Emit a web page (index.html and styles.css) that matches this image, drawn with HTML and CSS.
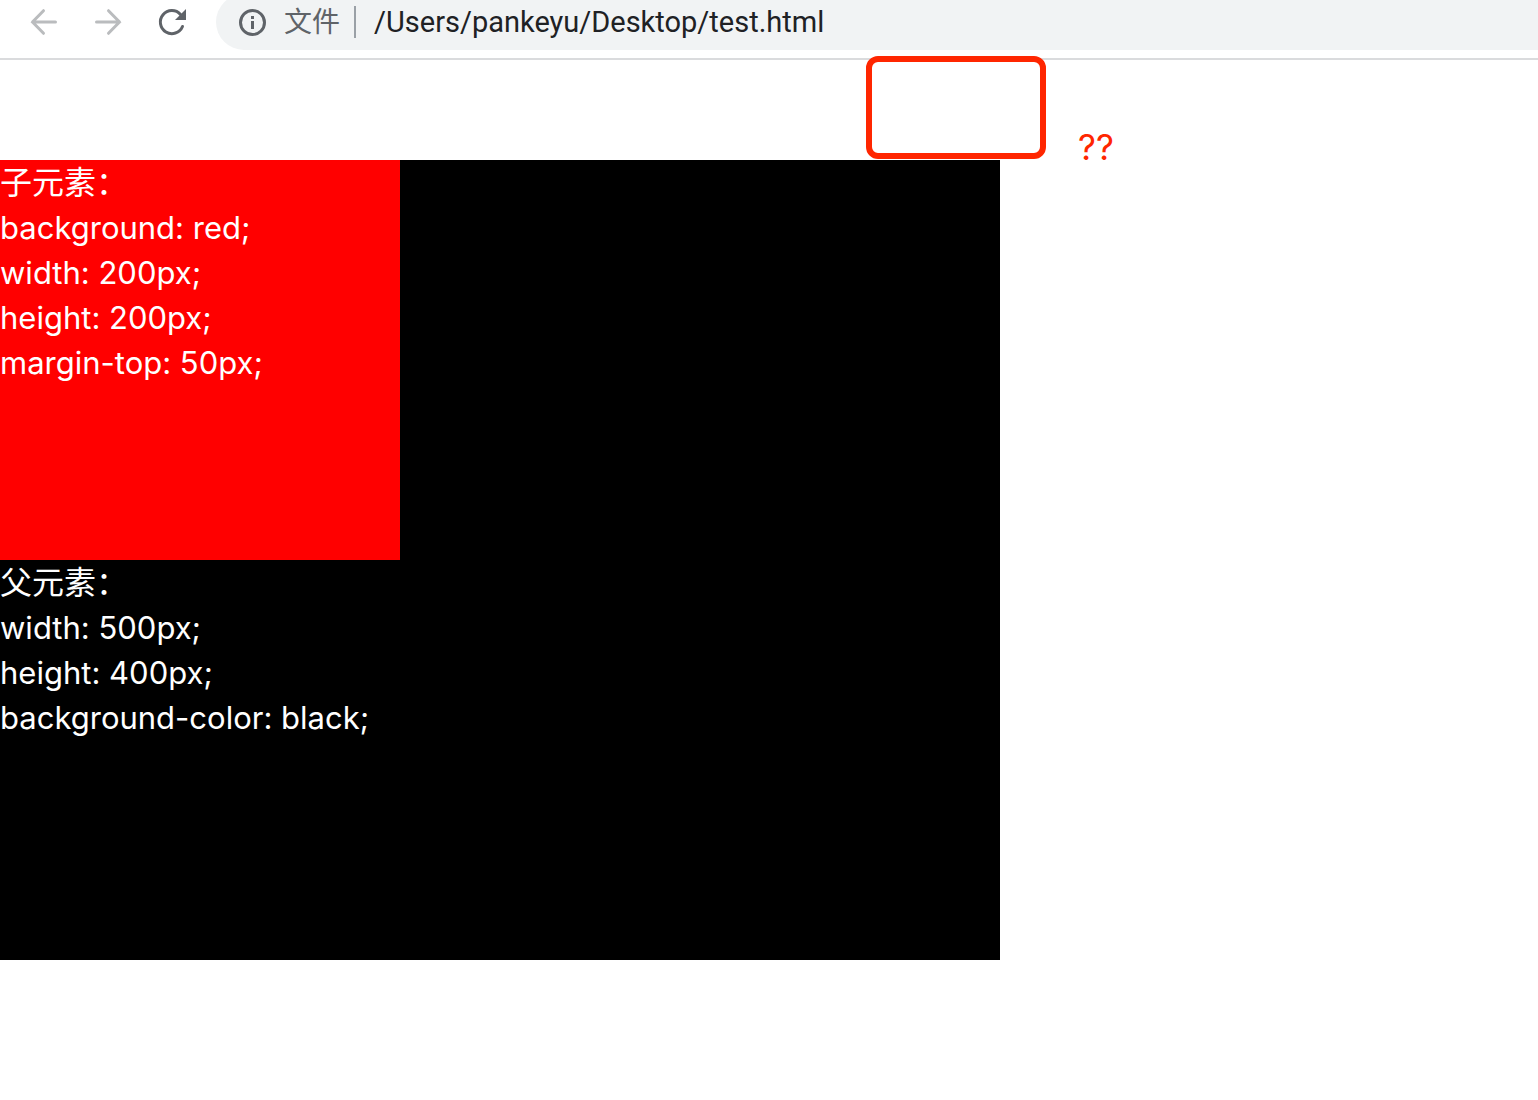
FILE: index.html
```html
<!DOCTYPE html>
<html lang="zh-CN">
<head>
<meta charset="utf-8">
<meta name="viewport" content="width=device-width, initial-scale=1">
<title>test.html</title>
<link rel="stylesheet" href="styles.css">
</head>
<body>
<header class="toolbar">
  <nav class="nav">
    <button class="nav-button nav-button-off" type="button" aria-label="后退">
      <svg class="icon" viewBox="0 0 32 32" fill="none" stroke="currentColor" stroke-width="3" stroke-linecap="round"><path d="M27.500 16H4.500M15.500 4.700L4.500 16L15.500 27.300"/></svg>
    </button>
    <button class="nav-button nav-button-off" type="button" aria-label="前进">
      <svg class="icon" viewBox="0 0 32 32" fill="none" stroke="currentColor" stroke-width="3" stroke-linecap="round"><path d="M4.500 16H27.500M16.500 4.700L27.500 16L16.500 27.300"/></svg>
    </button>
    <button class="nav-button" type="button" aria-label="重新加载">
      <svg class="icon" viewBox="0 0 32 32"><path d="M26.500 20.500A11.500 11.500 0 1 1 24.500 8.500" fill="none" stroke="currentColor" stroke-width="3" stroke-linecap="round"/><path d="M30 3V14H19Z" fill="currentColor"/></svg>
    </button>
  </nav>
  <div class="omnibox">
    <svg class="icon" viewBox="0 0 32 32" aria-hidden="true"><circle cx="16.500" cy="16.500" r="12" fill="none" stroke="currentColor" stroke-width="3"/><path d="M15 10h3v3h-3zM15 15h3v8h-3z" fill="currentColor"/></svg>
    <label class="scheme" for="address">文件</label>
    <span class="divider"></span>
    <input class="address" id="address" type="text" value="/Users/pankeyu/Desktop/test.html" spellcheck="false">
  </div>
</header>
<main class="page">
  <section class="parent">
    <div class="child">
      <p class="name">子元素：</p>
      <p>background: red;</p>
      <p>width: 200px;</p>
      <p>height: 200px;</p>
      <p>margin-top: 50px;</p>
    </div>
    <p class="name">父元素：</p>
    <p>width: 500px;</p>
    <p>height: 400px;</p>
    <p>background-color: black;</p>
  </section>
  <div class="marker"></div>
  <span class="question">??</span>
</main>
</body>
</html>
```
FILE: styles.css
```css
* {
  box-sizing: border-box;
}

body {
  margin: 0;
  background: #fff;
  font-family: Inter, "Noto Sans CJK SC", sans-serif;
}

p {
  margin: 0;
}

.toolbar {
  display: flex;
  align-items: flex-end;
  gap: 28px;
  height: 60px;
  padding: 0 0 8px 28px;
  border-bottom: 2px solid #dadbdd;
  overflow: hidden;
}

.nav {
  display: flex;
  align-items: center;
  gap: 32px;
  height: 56px;
}

.nav-button {
  display: flex;
  padding: 0;
  border: 0;
  background: none;
  color: #5f6368;
}

.nav-button-off {
  color: #babcbe;
}

.icon {
  display: block;
  flex: none;
  width: 32px;
  height: 32px;
}

.omnibox {
  display: flex;
  flex: 1;
  align-items: center;
  height: 56px;
  padding-left: 20px;
  border-radius: 28px 0 0 28px;
  background: #f1f3f4;
  color: #5f6368;
}

.scheme {
  margin-left: 16px;
  font-size: 28px;
  line-height: 40px;
}

.divider {
  width: 2px;
  height: 32px;
  margin: 0 18px 0 14px;
  background: #9aa0a6;
}

.address {
  flex: 1;
  min-width: 0;
  padding: 0;
  border: 0;
  outline: 0;
  background: none;
  color: #202124;
  font-family: Roboto, sans-serif;
  font-size: 29px;
  line-height: 40px;
}

.page {
  position: relative;
  padding-top: 100px;
}

.parent {
  width: 1000px;
  max-width: 100%;
  min-height: 800px;
  background: #000;
  color: #fff;
  font-size: 31px;
  line-height: 45px;
}

.child {
  width: 400px;
  height: 400px;
  background: #f00;
}

.name {
  font-size: 32px;
}

.marker {
  position: absolute;
  top: -4px;
  left: 866px;
  width: 180px;
  height: 103px;
  border: 6px solid #ff2600;
  border-radius: 12px;
}

.question {
  position: absolute;
  top: 64px;
  left: 1078px;
  color: #ff2600;
  font-size: 35px;
  line-height: 46px;
}
```
